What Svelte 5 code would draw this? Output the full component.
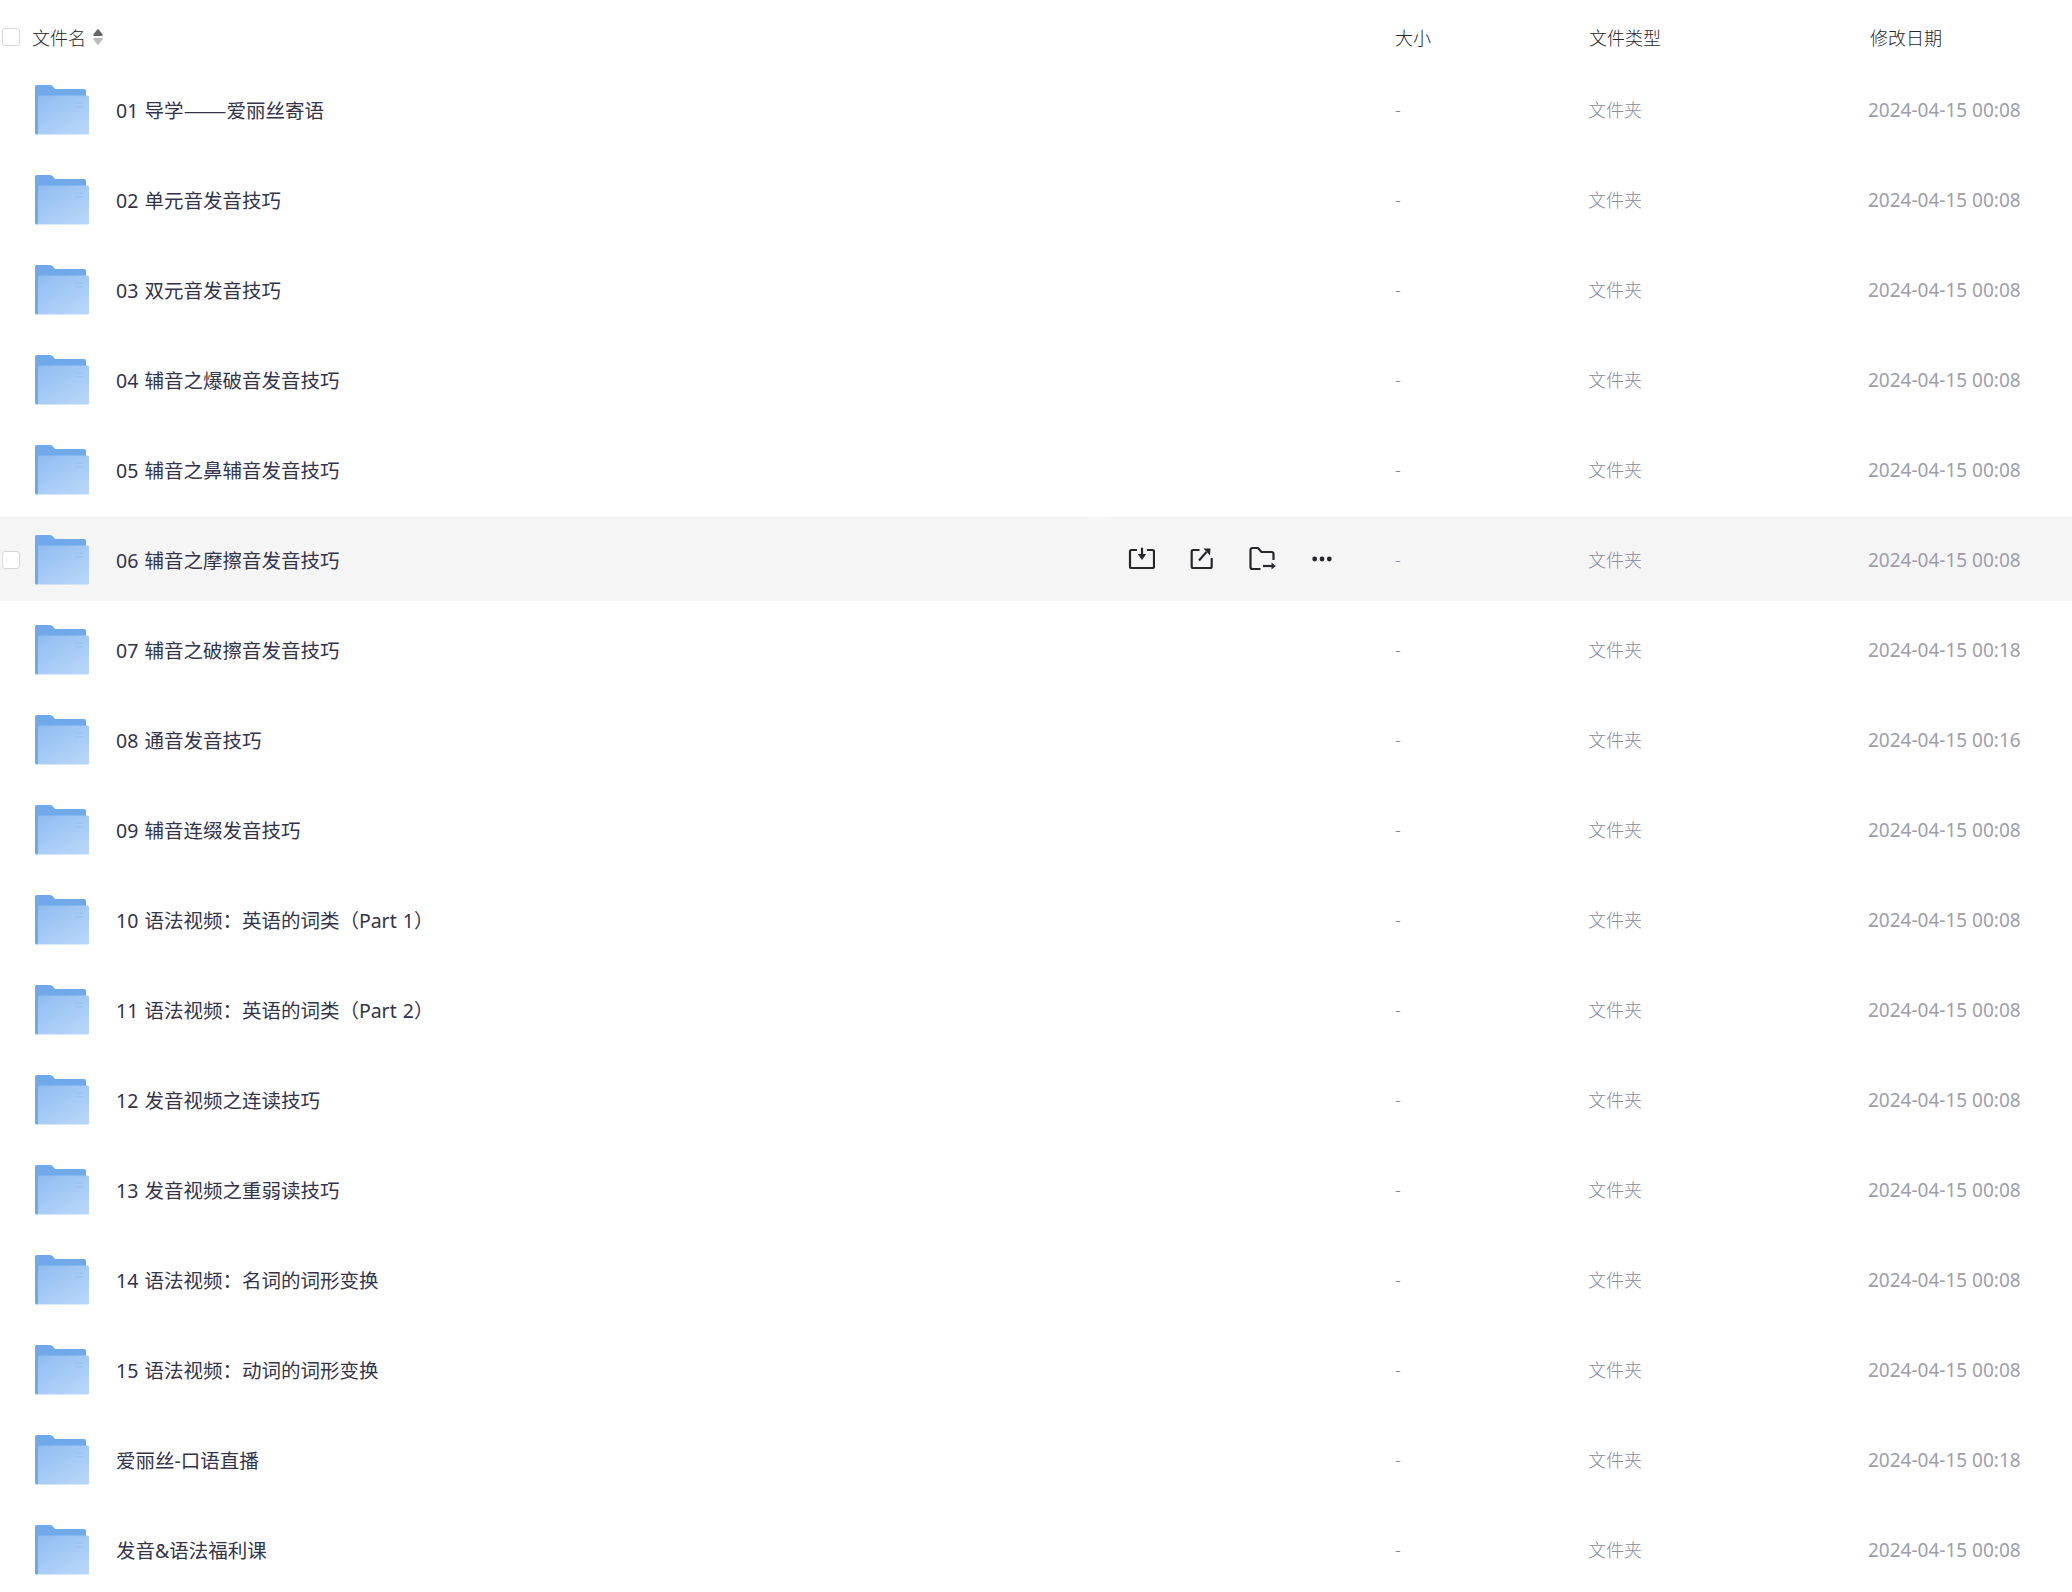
<script>
	const files = [
		{ name: '01 导学——爱丽丝寄语', date: '2024-04-15 00:08' },
		{ name: '02 单元音发音技巧', date: '2024-04-15 00:08' },
		{ name: '03 双元音发音技巧', date: '2024-04-15 00:08' },
		{ name: '04 辅音之爆破音发音技巧', date: '2024-04-15 00:08' },
		{ name: '05 辅音之鼻辅音发音技巧', date: '2024-04-15 00:08' },
		{ name: '06 辅音之摩擦音发音技巧', date: '2024-04-15 00:08' },
		{ name: '07 辅音之破擦音发音技巧', date: '2024-04-15 00:18' },
		{ name: '08 通音发音技巧', date: '2024-04-15 00:16' },
		{ name: '09 辅音连缀发音技巧', date: '2024-04-15 00:08' },
		{ name: '10 语法视频：英语的词类（Part 1）', date: '2024-04-15 00:08' },
		{ name: '11 语法视频：英语的词类（Part 2）', date: '2024-04-15 00:08' },
		{ name: '12 发音视频之连读技巧', date: '2024-04-15 00:08' },
		{ name: '13 发音视频之重弱读技巧', date: '2024-04-15 00:08' },
		{ name: '14 语法视频：名词的词形变换', date: '2024-04-15 00:08' },
		{ name: '15 语法视频：动词的词形变换', date: '2024-04-15 00:08' },
		{ name: '爱丽丝-口语直播', date: '2024-04-15 00:18' },
		{ name: '发音&语法福利课', date: '2024-04-15 00:08' }
	];

	let hovered = $state(5);
</script>

<div class="file-list">
	<div class="head">
		<div class="head-name">
			<span class="check"></span>
			<span>文件名</span>
			<svg class="sort" width="10" height="16" viewBox="0 0 10 16">
				<path d="M4.200 .6Q5 0 5.800 .6L9.600 5.500Q10 7 9 7H1Q0 7 .4 5.500Z" fill="#666" />
				<path d="M4.200 15.400Q5 16 5.800 15.400L9.600 10.500Q10 9 9 9H1Q0 9 .4 10.500Z" fill="#bbb" />
			</svg>
		</div>
		<div>大小</div>
		<div>文件类型</div>
		<div class="head-date">修改日期</div>
	</div>

	{#each files as file, i}
		{@const parts = file.name.split('——')}
		<div class="row" class:active={hovered === i} onmouseenter={() => (hovered = i)} role="row" tabindex="-1">
			<div class="name-cell">
				<span class="check" class:shown={hovered === i}></span>
				<svg class="folder" width="54" height="50" viewBox="0 0 54 50">
					<defs>
						<linearGradient id="front-{i}" x1="0" y1="0" x2="0.75" y2="1">
							<stop offset="0" stop-color="#8fbdf0" />
							<stop offset="1" stop-color="#b7d5f9" />
						</linearGradient>
					</defs>
					<path d="M1.500 0H15Q17 0 18 1.500L20 4H49Q51 4 51 6V12H3V49.500H1.500Q0 49.500 0 48V1.500Q0 0 1.500 0Z" fill="#6fa9ea" />
					<rect x="3" y="10.500" width="51" height="39" rx="1.500" fill="url(#front-{i})" />
					<rect x="40" y="17.500" width="8" height="1.500" fill="#9cc4f0" />
					<rect x="40" y="21" width="8" height="1.500" fill="#9cc4f0" />
				</svg>
				<span class="file-name">
					{#if parts.length > 1}{parts[0]}<span class="cjk-dash">——</span>{parts[1]}{:else}{file.name}{/if}
				</span>
				{#if hovered === i}
					<div class="actions">
						<svg width="28" height="28" viewBox="0 0 28 28" fill="none" stroke="#26272b" stroke-width="2.200">
							<path d="M10 5H4.500A1.500 1.500 0 0 0 3 6.500V21.500A1.500 1.500 0 0 0 4.500 23H25.500A1.500 1.500 0 0 0 27 21.500V6.500A1.500 1.500 0 0 0 25.500 5H20" />
							<path d="M15 2.700V10" />
							<path d="M10.800 9H19.200L15 15Z" fill="#26272b" stroke="none" />
						</svg>
						<svg width="28" height="28" viewBox="0 0 28 28" fill="none" stroke="#26272b" stroke-width="2.200">
							<path d="M12.500 5H6.200A1.500 1.500 0 0 0 4.700 6.500V21.500A1.500 1.500 0 0 0 6.200 23H23.200A1.500 1.500 0 0 0 24.700 21.500V13" />
							<path d="M12 15.500 19.500 7" />
							<path d="M16.500 3.500H23.500L23 10.500Z" fill="#26272b" stroke="none" />
						</svg>
						<svg width="28" height="28" viewBox="0 0 28 28" fill="none" stroke="#26272b" stroke-width="2.200">
							<path d="M12.500 24H4.500A2 2 0 0 1 2.500 22V5A2 2 0 0 1 4.500 3H10L13.500 7H23.500A2 2 0 0 1 25.500 9V15" />
							<path d="M15 21H24" />
							<path d="M23.500 17.500 27.800 21 23.500 24.500Z" fill="#26272b" stroke="none" />
						</svg>
						<svg width="28" height="28" viewBox="0 0 28 28" fill="#26272b">
							<circle cx="6.700" cy="14" r="2.400" />
							<circle cx="14" cy="14" r="2.400" />
							<circle cx="21.300" cy="14" r="2.400" />
						</svg>
					</div>
				{/if}
			</div>
			<div class="muted">-</div>
			<div class="muted kind">文件夹</div>
			<div class="muted date">{file.date}</div>
		</div>
	{/each}
</div>

<style>
	:global(body) {
		background: #fff;
	}

	.file-list {
		width: 2072px;
		font-family: "Noto Sans", "Noto Sans CJK SC", sans-serif;
		font-weight: 300;
		color: #25262b;
	}

	.head,
	.row {
		display: grid;
		grid-template-columns: 1395px 194px 279px 1fr;
		align-items: center;
	}

	.head {
		height: 74px;
		margin-bottom: -7px;
		font-size: 18px;
	}

	.head > div:not(.head-name) {
		margin-top: -1px;
	}

	.head-name {
		display: flex;
		align-items: center;
		padding-left: 2px;
	}

	.head-date {
		margin-left: 2px;
	}

	.check {
		width: 18px;
		height: 18px;
		box-sizing: border-box;
		border: 1px solid #d6d6d6;
		border-radius: 3px;
		background: #fff;
		flex: none;
		margin-right: 12px;
	}

	.row .check {
		margin-right: 15px;
		margin-top: 1px;
		visibility: hidden;
	}

	.row .check.shown {
		visibility: visible;
	}

	.sort {
		margin-left: 7px;
	}

	.row {
		height: 84px;
		margin-bottom: 6px;
	}

	.row.active {
		background: #f5f5f6;
	}

	.name-cell {
		display: flex;
		align-items: center;
		height: 100%;
		padding-left: 2px;
		padding-right: 59px;
		box-sizing: border-box;
	}

	.folder {
		flex: none;
		margin-top: 2px;
	}

	.file-name {
		margin-left: 27px;
		margin-top: 1px;
		font-size: 19.500px;
		font-weight: 400;
		word-spacing: 1px;
		color: #33344a;
	}

	.cjk-dash {
		font-family: "Noto Sans CJK SC", sans-serif;
		font-size: 26px;
		font-weight: 300;
		line-height: 1;
		vertical-align: -2px;
	}

	.actions {
		margin-left: auto;
		height: 100%;
		display: flex;
		align-items: center;
		gap: 32.500px;
		padding-left: 42px;
		background: linear-gradient(90deg, rgba(255, 255, 255, 0) 0, rgba(255, 255, 255, 0.12) 10px, rgba(255, 255, 255, 0) 30px);
	}

	.muted {
		color: #8a8b99;
		font-size: 18px;
	}

	.muted.kind {
		margin-left: -1px;
	}

	.muted.date {
		font-size: 19px;
		font-weight: 400;
		color: #9d9eaa;
		margin-top: 1px;
	}
</style>
